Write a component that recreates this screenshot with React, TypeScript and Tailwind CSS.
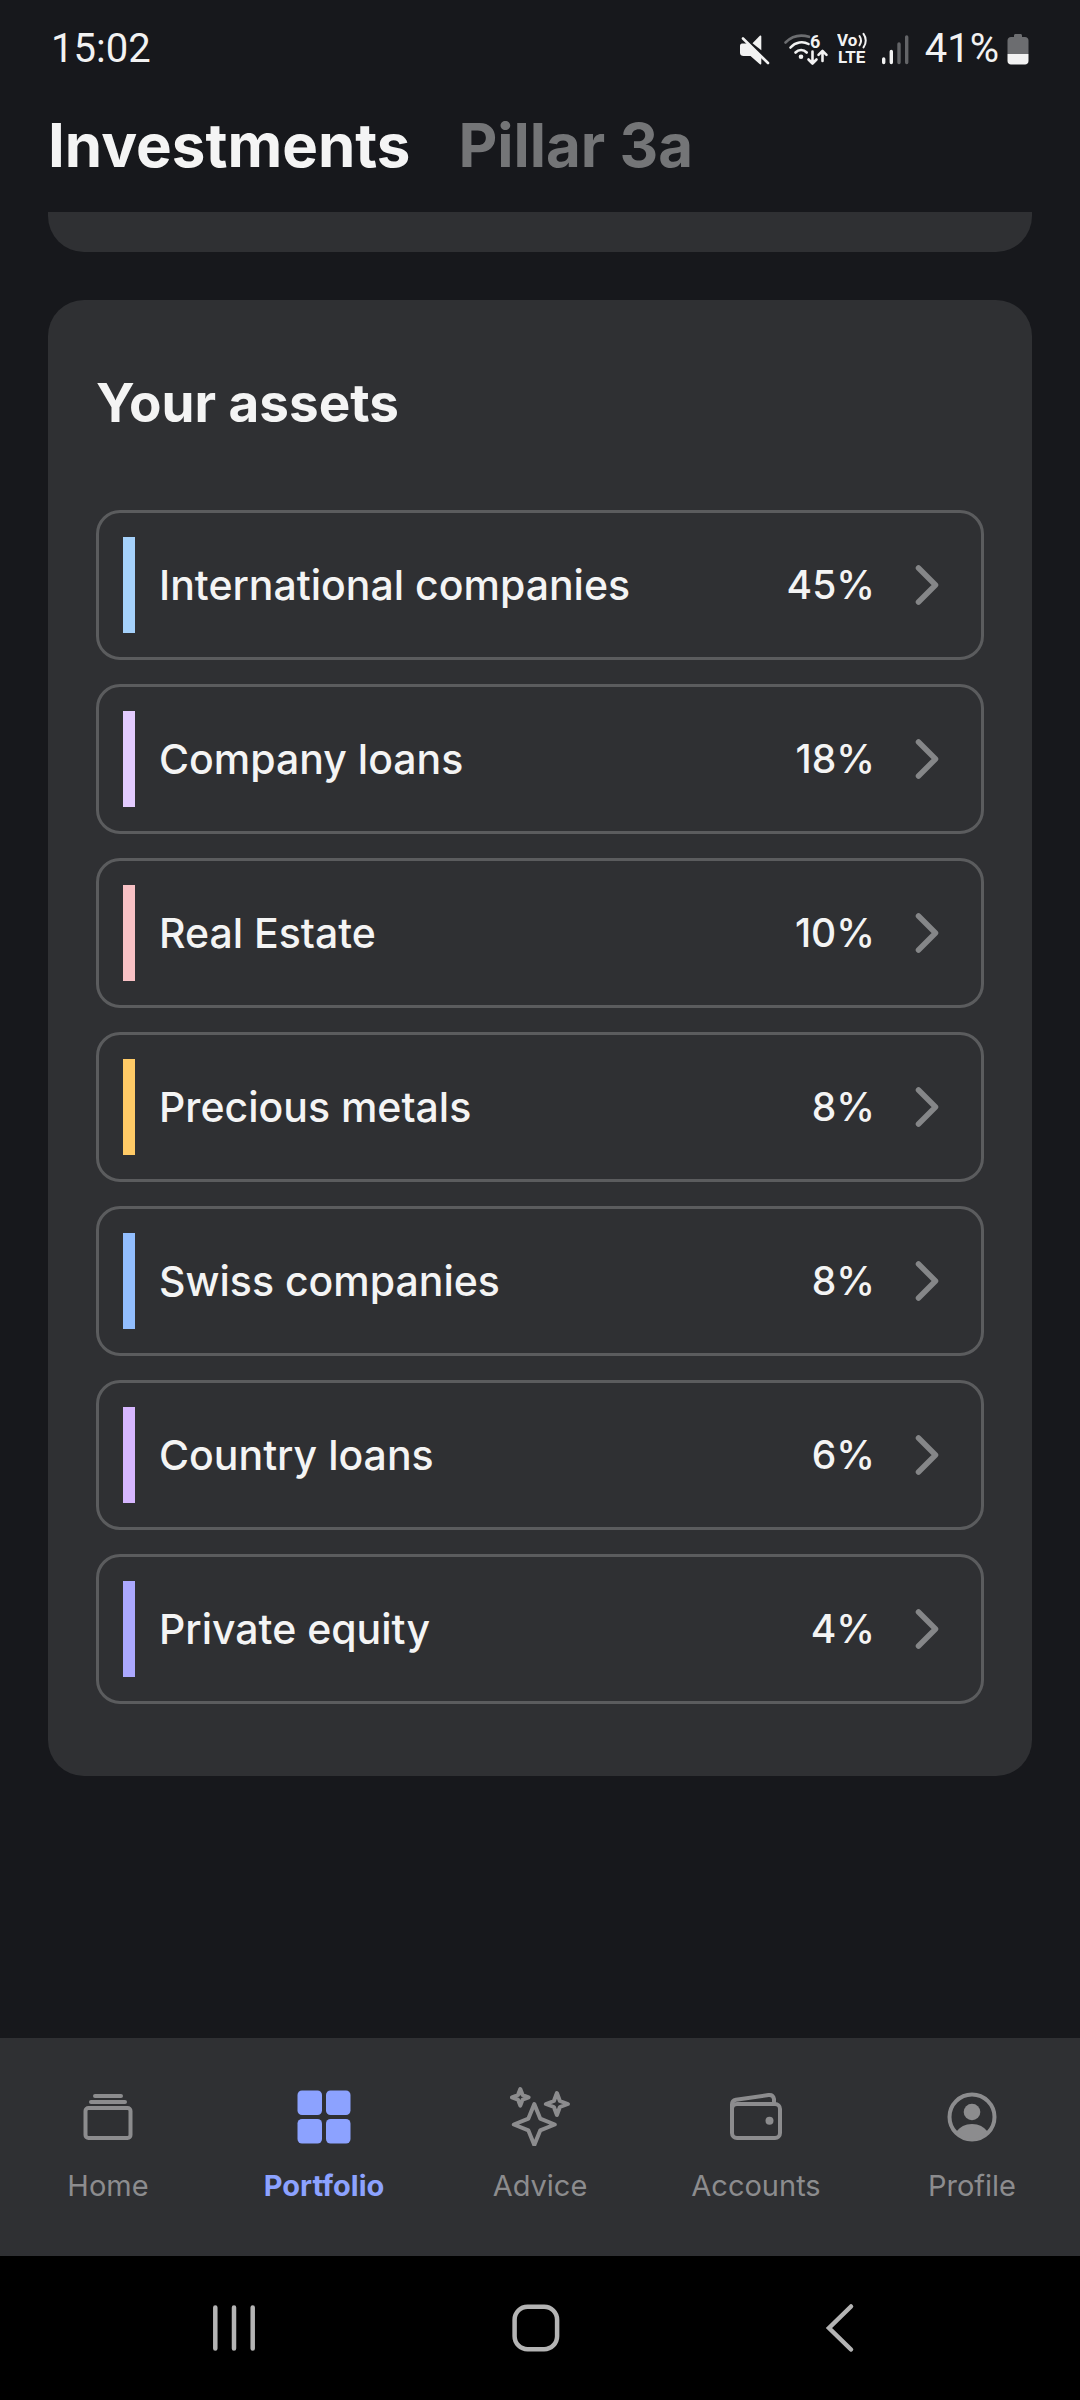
import { useState } from "react";
import type { ReactNode } from "react";

interface Asset {
  name: string;
  share: number;
  barClass: string;
}

interface NavItem {
  label: string;
  icon: ReactNode;
}

const ASSETS: readonly Asset[] = [
  { name: "International companies", share: 45, barClass: "bg-[#a5d1fb]" },
  { name: "Company loans", share: 18, barClass: "bg-[#e3cbff]" },
  { name: "Real Estate", share: 10, barClass: "bg-[#f8c1c5]" },
  { name: "Precious metals", share: 8, barClass: "bg-[#ffca66]" },
  { name: "Swiss companies", share: 8, barClass: "bg-[#92beff]" },
  { name: "Country loans", share: 6, barClass: "bg-[#d6b6ff]" },
  { name: "Private equity", share: 4, barClass: "bg-[#aba8ff]" },
];

const TABS = ["Investments", "Pillar 3a"] as const;

function MuteIcon() {
  return (
    <svg viewBox="0 0 32 32" className="size-8" aria-hidden="true">
      <path
        d="M3 10.5h6l13.3 13.3v6.6c0 1-1 1.3-1.7.7L11.5 23h-7C2.5 23 1 21.800 1 20v-7c0-1.500.8-2.500 2-2.500Z"
        fill="#f2f2f2"
      />
      <path d="m13.500 10.200 7.300-7.400c.6-.6 1.500-.3 1.500.6v13.800Z" fill="#f2f2f2" />
      <path d="m4 5.500 25 24.500" stroke="#f2f2f2" strokeWidth="2.600" strokeLinecap="round" />
    </svg>
  );
}

function WifiIcon() {
  return (
    <svg viewBox="0 -2 46 38" className="h-[38px] w-[46px]" fill="none" aria-hidden="true">
      <g strokeLinecap="round" strokeWidth="2.600">
        <path d="M2.500 10.500C9 4 18 2.500 26 4.800" stroke="#6c6d70" />
        <path d="M7.500 15.500c5-5.700 12.500-6.700 18-3.500" stroke="#f2f2f2" />
        <path d="M12.500 20.500c3.200-3.400 8-3.400 11.200 0" stroke="#f2f2f2" />
      </g>
      <circle cx="18" cy="24.800" r="2.300" fill="#f2f2f2" />
      <text x="27" y="15.500" fontSize="18" fontWeight="700" fill="#f2f2f2" fontFamily="Roboto, sans-serif">
        6
      </text>
      <g stroke="#f2f2f2" strokeWidth="2.600" strokeLinecap="round" strokeLinejoin="round">
        <path d="M29.500 19.500V31M25.500 27.500l4 4 4-4" />
        <path d="M39.500 29V19.500M35.500 22.800l4-4 4 4" />
      </g>
    </svg>
  );
}

function VolteIcon() {
  return (
    <svg viewBox="0 -2 32 40" className="h-10 w-8" fill="none" aria-label="VoLTE">
      <g fill="#f2f2f2" fontFamily="Roboto, sans-serif" fontWeight="700">
        <text x="0" y="15" fontSize="17">
          Vo
        </text>
        <text x="1" y="32" fontSize="17">
          LTE
        </text>
      </g>
      <g stroke="#f2f2f2" strokeWidth="2" strokeLinecap="round">
        <path d="M22.500 5c1.800 2.800 1.800 6.500 0 9.300" />
        <path d="M26.500 2.800c3 4 3 9.600 0 13.600" />
      </g>
    </svg>
  );
}

function SignalIcon() {
  return (
    <svg viewBox="0 0 28 32" className="h-8 w-7" strokeWidth="3.400" strokeLinecap="round" aria-hidden="true">
      <path d="M2.700 26v3.600M10.300 18.500v11.100" stroke="#f2f2f2" />
      <path d="M18 11v18.600M25.700 4v25.600" stroke="#636467" />
    </svg>
  );
}

function BatteryIcon() {
  return (
    <svg viewBox="0 0 22 32" className="h-8 w-[22px]" aria-hidden="true">
      <path
        d="M7 4V2.500C7 1.600 7.600 1 8.500 1h5c.9 0 1.500.6 1.500 1.500V4h3c2 0 3.500 1.500 3.500 3.500V21H.5V7.500C.5 5.500 2 4 4 4Z"
        fill="#6c6d70"
      />
      <path d="M.5 21h21v7c0 2-1.500 3.500-3.500 3.500H4C2 31.500.5 30 .5 28Z" fill="#f2f2f2" />
    </svg>
  );
}

function ChevronRight() {
  return (
    <svg
      viewBox="0 0 48 48"
      className="size-12"
      fill="none"
      stroke="#858688"
      strokeWidth="5.500"
      strokeLinecap="round"
      strokeLinejoin="round"
      aria-hidden="true"
    >
      <path d="m15.500 7 17 17-17 17" />
    </svg>
  );
}

function NavIcon({ children }: { children: ReactNode }) {
  return (
    <svg
      viewBox="0 0 60 60"
      className="size-[60px]"
      fill="none"
      stroke="currentColor"
      strokeWidth="4"
      strokeLinecap="round"
      strokeLinejoin="round"
      aria-hidden="true"
    >
      {children}
    </svg>
  );
}

const NAV_ITEMS: readonly NavItem[] = [
  {
    label: "Home",
    icon: (
      <NavIcon>
        <path d="M17 10h26M13 16h34" />
        <rect x="7.500" y="22" width="45" height="30" rx="3" />
      </NavIcon>
    ),
  },
  {
    label: "Portfolio",
    icon: (
      <NavIcon>
        <g fill="currentColor" stroke="none">
          <rect x="3.500" y="4.500" width="24.500" height="24.500" rx="4.500" />
          <rect x="32" y="4.500" width="24.500" height="24.500" rx="4.500" />
          <rect x="3.500" y="33" width="24.500" height="24.500" rx="4.500" />
          <rect x="32" y="33" width="24.500" height="24.500" rx="4.500" />
        </g>
      </NavIcon>
    ),
  },
  {
    label: "Advice",
    icon: (
      <NavIcon>
        <path d="m24.300 18 5.900 14.600 14.600 5.900-14.600 5.900L24.300 59l-5.900-14.600-14.600-5.900 14.600-5.900Z" />
        <path d="m46.900 7 3 8 8 3-8 3-3 8-3-8-8-3 8-3Z" />
        <path d="m10.300 3 2.300 6 6 2.300-6 2.300-2.300 6-2.300-6-6-2.300 6-2.300Z" />
      </NavIcon>
    ),
  },
  {
    label: "Accounts",
    icon: (
      <NavIcon>
        <rect x="6" y="18" width="48" height="34" rx="5" />
        <path d="M6 23v-4.500c0-2.700 1.600-4.300 4-4.800L42.500 9c3-.4 5 1.300 5.500 4v5" />
        <circle cx="43.500" cy="34.700" r="4" fill="currentColor" stroke="none" />
      </NavIcon>
    ),
  },
  {
    label: "Profile",
    icon: (
      <NavIcon>
        <circle cx="30" cy="31" r="22.500" />
        <circle cx="30" cy="26" r="8.300" fill="currentColor" stroke="none" />
        <path
          d="M14.500 45.500C18 41 23 38 30 38s12 3 15.500 7.500C41 50.500 36 53 30 53s-11-2.500-15.500-7.500Z"
          fill="currentColor"
          stroke="none"
        />
      </NavIcon>
    ),
  },
];

function StatusBar() {
  return (
    <div className="flex h-24 items-center justify-between px-[51px] pt-0.5 text-[#f2f2f2]">
      <span className="font-['Roboto',sans-serif] text-[40px] leading-10">15:02</span>
      <div className="flex items-center gap-2">
        <MuteIcon />
        <div className="flex items-center gap-2 pl-1">
          <WifiIcon />
          <VolteIcon />
        </div>
        <div className="pl-1">
          <SignalIcon />
        </div>
        <span className="pl-2 font-['Roboto',sans-serif] text-[40px] leading-10">41%</span>
        <BatteryIcon />
      </div>
    </div>
  );
}

function AssetRow({ asset }: { asset: Asset }) {
  return (
    <button
      type="button"
      className="flex w-full items-center rounded-3xl border-3 border-[#5b5c5e] py-6 pr-[30px] pl-6 text-left font-medium text-[#f4f4f4]"
    >
      <span className={`h-24 w-3 ${asset.barClass}`} />
      <span className="flex-1 pl-6 text-[41px] leading-[60px]">{asset.name}</span>
      <span className="pr-7 text-[39px] leading-[60px]">{asset.share}%</span>
      <ChevronRight />
    </button>
  );
}

/** Android three-button navigation strip. */
function SystemBar() {
  return (
    <div className="flex h-36 items-center justify-between bg-black px-[206px]">
      <button type="button" aria-label="Recent apps">
        <svg viewBox="0 0 56 56" className="size-14" stroke="#b4b4b4" strokeWidth="4.500" strokeLinecap="round">
          <path d="M9.300 7.500v41M28 7.500v41M46.700 7.500v41" />
        </svg>
      </button>
      <button type="button" aria-label="Home screen">
        <svg viewBox="0 0 56 56" className="size-14" fill="none" stroke="#b4b4b4" strokeWidth="4.500">
          <rect x="2.600" y="6.700" width="42.500" height="42.500" rx="13" />
        </svg>
      </button>
      <button type="button" aria-label="Back">
        <svg viewBox="0 0 56 56" className="size-14" fill="none" stroke="#b4b4b4" strokeWidth="4.500" strokeLinecap="round">
          <path d="M33 6.500 11 28l22 21.500" />
        </svg>
      </button>
    </div>
  );
}

export default function App() {
  const [activeTab, setActiveTab] = useState<string>("Investments");
  const [activeNav, setActiveNav] = useState("Portfolio");

  return (
    <div className="flex min-h-screen flex-col bg-[#17181c] font-['Inter',sans-serif]">
      <StatusBar />

      <div className="flex gap-12 px-12 pt-[17px] pb-[35px]" role="tablist">
        {TABS.map((tab) => (
          <button
            key={tab}
            type="button"
            role="tab"
            aria-selected={activeTab === tab}
            onClick={() => setActiveTab(tab)}
            className={`text-6xl leading-[64px] font-bold ${
              activeTab === tab ? "text-[#f4f4f4]" : "text-[#747577]"
            }`}
          >
            {tab}
          </button>
        ))}
      </div>

      <main className="flex flex-1 flex-col gap-12 px-12">
        {/* Tail of the card scrolled under the header */}
        <div className="h-10 rounded-b-[36px] bg-[#2f3033]" />

        <section className="rounded-[36px] bg-[#2f3033] px-12 py-[72px]">
          <h2 className="text-[53px] leading-[62px] font-bold text-[#f4f4f4]">Your assets</h2>
          <ul className="mt-[76px] flex flex-col gap-6">
            {ASSETS.map((asset) => (
              <li key={asset.name}>
                <AssetRow asset={asset} />
              </li>
            ))}
          </ul>
        </section>
      </main>

      <nav className="grid grid-cols-5 bg-[#2f3033] pt-12 pb-[50px]">
        {NAV_ITEMS.map((item) => {
          const active = item.label === activeNav;
          return (
            <a
              key={item.label}
              href={`#${item.label.toLowerCase()}`}
              aria-current={active ? "page" : undefined}
              onClick={() => setActiveNav(item.label)}
              className={`flex flex-col items-center gap-5 text-[29px] leading-10 ${
                active ? "font-bold text-[#8ca2ff]" : "text-[#8c8c8e]"
              }`}
            >
              {item.icon}
              {item.label}
            </a>
          );
        })}
      </nav>

      <SystemBar />
    </div>
  );
}
